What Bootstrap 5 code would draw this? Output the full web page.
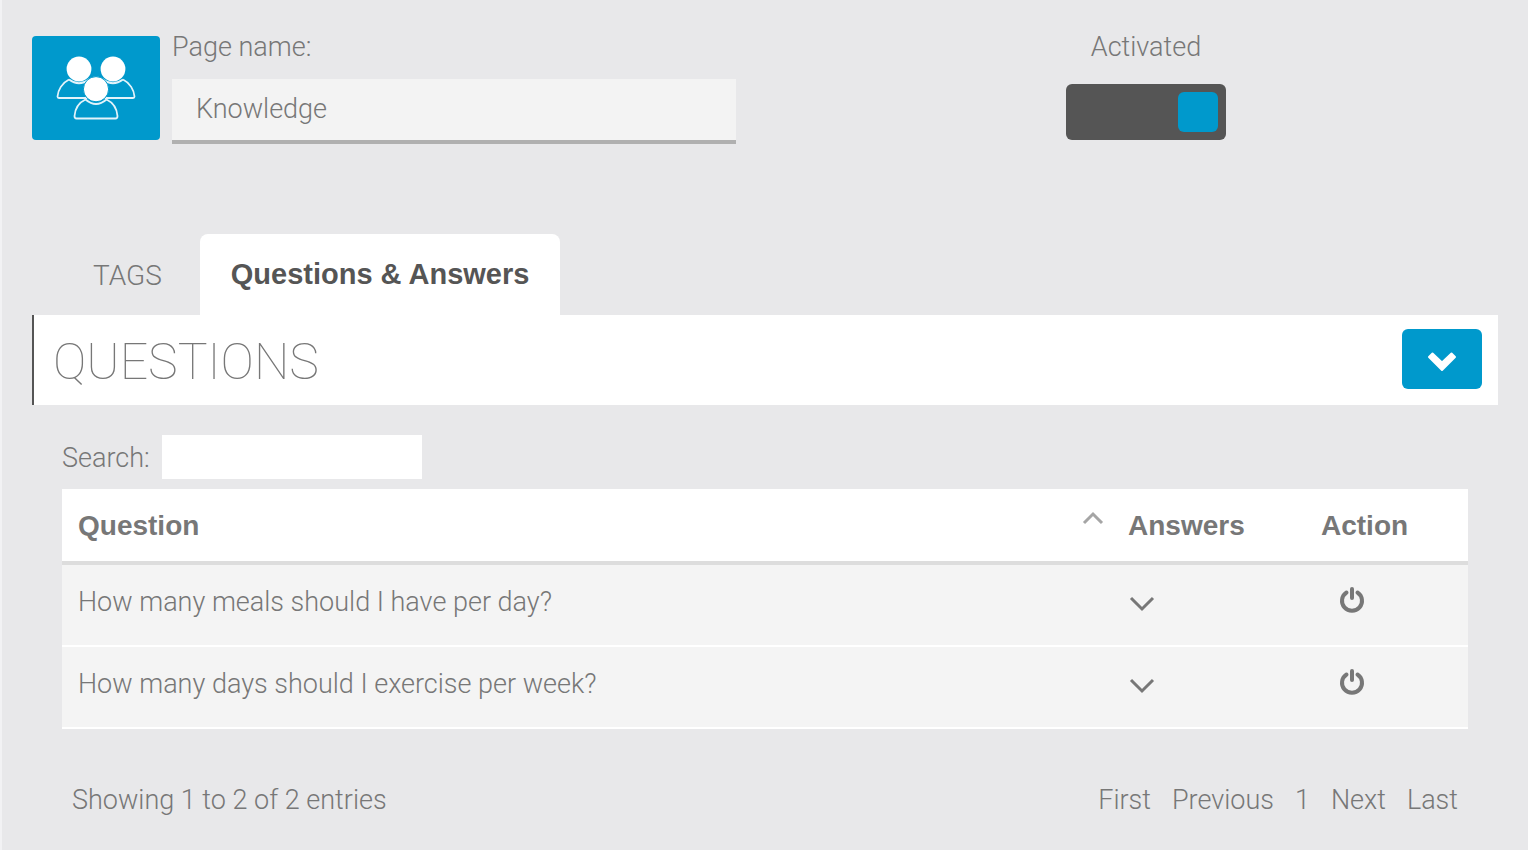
<!DOCTYPE html>
<html lang="en">
<head>
<meta charset="utf-8">
<meta name="viewport" content="width=device-width, initial-scale=1">
<title>Knowledge</title>
<link href="https://cdn.jsdelivr.net/npm/bootstrap@5.3.0/dist/css/bootstrap.min.css" rel="stylesheet">
<style>
  :root { --brand: #0099cc; --ink: #777; --dark: #555; --page: #e8e8ea; }
  body {
    background: var(--page);
    color: var(--ink);
    font-family: Roboto, "Liberation Sans", sans-serif;
    font-weight: 300;
    font-size: 27px;
    line-height: 40px;
    border-left: 2px solid #f2f2f4;
  }
  .page-shell { padding: 27px 30px 24px; min-height: 100vh; }
  .strong-text { font-family: "Liberation Sans", sans-serif; font-weight: 700; }
  .name-col { padding-right: 29px; }
  .state-col { padding-left: 29px; }
  .page-icon {
    width: 128px; height: 104px; margin: 9px 12px 0 0;
    background: var(--brand); border: 0; border-radius: 4px;
  }
  .name-input, .name-input:focus {
    height: 65px; margin-top: 12px; padding: 0 24px 2px;
    background: #f3f3f3; color: var(--ink); font-size: 27px; font-weight: 300;
    border: 0; border-bottom: 4px solid #b0b0b0; border-radius: 0; box-shadow: none;
  }
  .toggle-box {
    appearance: none; display: flex; justify-content: flex-start;
    width: 160px; height: 56px; margin: 17px 0 0; padding: 8px;
    background: var(--dark); border-radius: 6px; cursor: pointer;
  }
  .toggle-box::before { content: ""; width: 40px; height: 40px; border-radius: 6px; background: #999; }
  .toggle-box:checked { justify-content: flex-end; }
  .toggle-box:checked::before { background: var(--brand); }
  .section-tabs { margin: 90px 0 0 31px; gap: 8px; border: 0; }
  .section-tabs .nav-link {
    height: 81px; margin: 0; padding: 22px 30px 18px; border: 0; border-radius: 8px 8px 0 0;
    color: var(--ink); font-size: 28px;
  }
  .section-tabs .nav-link.active { padding: 20px 31px; background: #fff; color: var(--dark); font-size: 29px; }
  .panel-head { padding: 14px 16px 16px 19px; border-left: 2px solid var(--dark); background: #fff; }
  .panel-title { margin: 0; padding-top: 6px; font-size: 50px; line-height: 54px; font-weight: 100; }
  .collapse-btn, .collapse-btn:hover { width: 80px; height: 60px; padding: 6px 0 0; border: 0; border-radius: 6px; background: var(--brand); }
  .panel-content { padding: 30px 30px 0; }
  .search-label { padding-top: 2px; }
  .search-input { width: 260px; height: 44px; border: 0; border-radius: 0; margin-left: 12px; }
  .qa-table { table-layout: fixed; color: var(--ink); margin: 10px 0 0; }
  .qa-table th { height: 74px; padding: 17px 16px 13px; background: #fff; border-bottom: 4px solid #ddd; color: var(--ink); font-size: 28px; vertical-align: top; }
  .qa-table td { height: 82px; padding: 17px 16px 23px; background: #f4f4f4; border-bottom: 2px solid #fff; color: var(--ink); vertical-align: top; }
  .qa-table th.question-col { padding-right: 8px; }
  .answers-col { width: 193px; }
  .action-col { width: 163px; }
  .icon-btn { display: flex; align-items: center; height: 38px; padding: 0; border: 0; background: none; color: var(--ink); }
  .table-foot { padding: 51px 10px 0; }
  .pager { gap: 21px; }
  .pager a { color: var(--ink); text-decoration: none; }
</style>
</head>
<body>
<main class="page-shell">
  <form class="row g-0">
    <div class="col-6 name-col d-flex align-items-start">
      <button type="button" class="page-icon flex-shrink-0 d-flex align-items-center justify-content-center p-0" aria-label="Choose page icon">
        <svg width="80" height="64" viewBox="0 0 80 64" fill="none" stroke="#e3f3fa" stroke-width="1.8" stroke-linejoin="round">
          <path d="M13 23.500C6 27 2 34 1.500 40.500Q1.500 42 3 42H77Q78.500 42 78.500 40.500C78 34 74 27 67 23.500"/>
          <path d="M13 23.500Q23 31 33 23.500M47 23.500Q57 31 67 23.500"/>
          <path d="M29.500 43.500C22 47 19 54 18.500 60Q18.500 62.500 20.500 62.500H59.500Q61.500 62.500 61.500 60C61 54 58 47 50.500 43.500Q40 52.500 29.500 43.500Z" fill="#0099cc"/>
          <g fill="#fff" stroke="none"><circle cx="23" cy="13" r="12.400"/><circle cx="57" cy="13" r="12.400"/></g>
          <circle cx="40" cy="33.200" r="12.600" fill="#fff" stroke="#0099cc" stroke-width="1"/>
        </svg>
      </button>
      <div class="flex-grow-1">
        <label class="d-block" for="pageName">Page name:</label>
        <input class="form-control name-input" id="pageName" type="text" value="Knowledge">
      </div>
    </div>
    <div class="col-6 state-col d-flex flex-column align-items-center">
      <label for="activated">Activated</label>
      <input class="toggle-box" id="activated" type="checkbox" role="switch" checked>
    </div>
  </form>

  <ul class="nav nav-tabs section-tabs">
    <li class="nav-item"><a class="nav-link" href="#tags">TAGS</a></li>
    <li class="nav-item"><a class="nav-link active strong-text" href="#questions" aria-current="page">Questions &amp; Answers</a></li>
  </ul>

  <section id="questions">
    <header class="panel-head d-flex align-items-center justify-content-between">
      <h1 class="panel-title">QUESTIONS</h1>
      <button type="button" class="btn collapse-btn d-flex align-items-center justify-content-center" aria-label="Collapse questions">
        <svg width="30" height="20" viewBox="0 0 30 20" fill="#fff" stroke="#fff" stroke-width="2" stroke-linejoin="round"><path d="M2 5 5.500 1.500 15 10.500 24.500 1.500 28 5 15 18Z"/></svg>
      </button>
    </header>
    <div class="panel-content">
      <div class="d-flex align-items-center">
        <label class="search-label" for="search">Search:</label>
        <input class="form-control search-input" id="search" type="search">
      </div>
      <table class="table qa-table">
        <thead>
          <tr class="strong-text">
            <th scope="col" class="question-col">
              <div class="d-flex justify-content-between">Question
                <svg width="22" height="24" viewBox="0 0 22 24" fill="none" stroke="#a5a5a5" stroke-width="3"><path d="M2 17 11 8 20 17"/></svg>
              </div>
            </th>
            <th scope="col" class="answers-col">Answers</th>
            <th scope="col" class="action-col">Action</th>
          </tr>
        </thead>
        <tbody>
          <tr>
            <td>How many meals should I have per day?</td>
            <td><button type="button" class="icon-btn" aria-label="Show answers"><svg class="mt-1" width="28" height="20" viewBox="0 0 28 20" fill="none" stroke="currentColor" stroke-width="3"><path d="M3 5 14 16 25 5"/></svg></button></td>
            <td><button type="button" class="icon-btn ms-3" aria-label="Deactivate question"><svg width="30" height="30" viewBox="0 0 30 30" fill="none" stroke="currentColor" stroke-width="4" stroke-linecap="round"><path d="M15 3V12M9.500 6.500A10 10 0 1 0 20.500 6.500"/></svg></button></td>
          </tr>
          <tr>
            <td>How many days should I exercise per week?</td>
            <td><button type="button" class="icon-btn" aria-label="Show answers"><svg class="mt-1" width="28" height="20" viewBox="0 0 28 20" fill="none" stroke="currentColor" stroke-width="3"><path d="M3 5 14 16 25 5"/></svg></button></td>
            <td><button type="button" class="icon-btn ms-3" aria-label="Deactivate question"><svg width="30" height="30" viewBox="0 0 30 30" fill="none" stroke="currentColor" stroke-width="4" stroke-linecap="round"><path d="M15 3V12M9.500 6.500A10 10 0 1 0 20.500 6.500"/></svg></button></td>
          </tr>
        </tbody>
      </table>
      <footer class="table-foot d-flex justify-content-between">
        <span>Showing 1 to 2 of 2 entries</span>
        <nav class="pager d-flex" aria-label="Table pages">
          <a href="#first">First</a><a href="#previous">Previous</a><a href="#page1">1</a><a href="#next">Next</a><a href="#last">Last</a>
        </nav>
      </footer>
    </div>
  </section>
</main>
<script src="https://cdn.jsdelivr.net/npm/bootstrap@5.3.0/dist/js/bootstrap.bundle.min.js"></script>
</body>
</html>
